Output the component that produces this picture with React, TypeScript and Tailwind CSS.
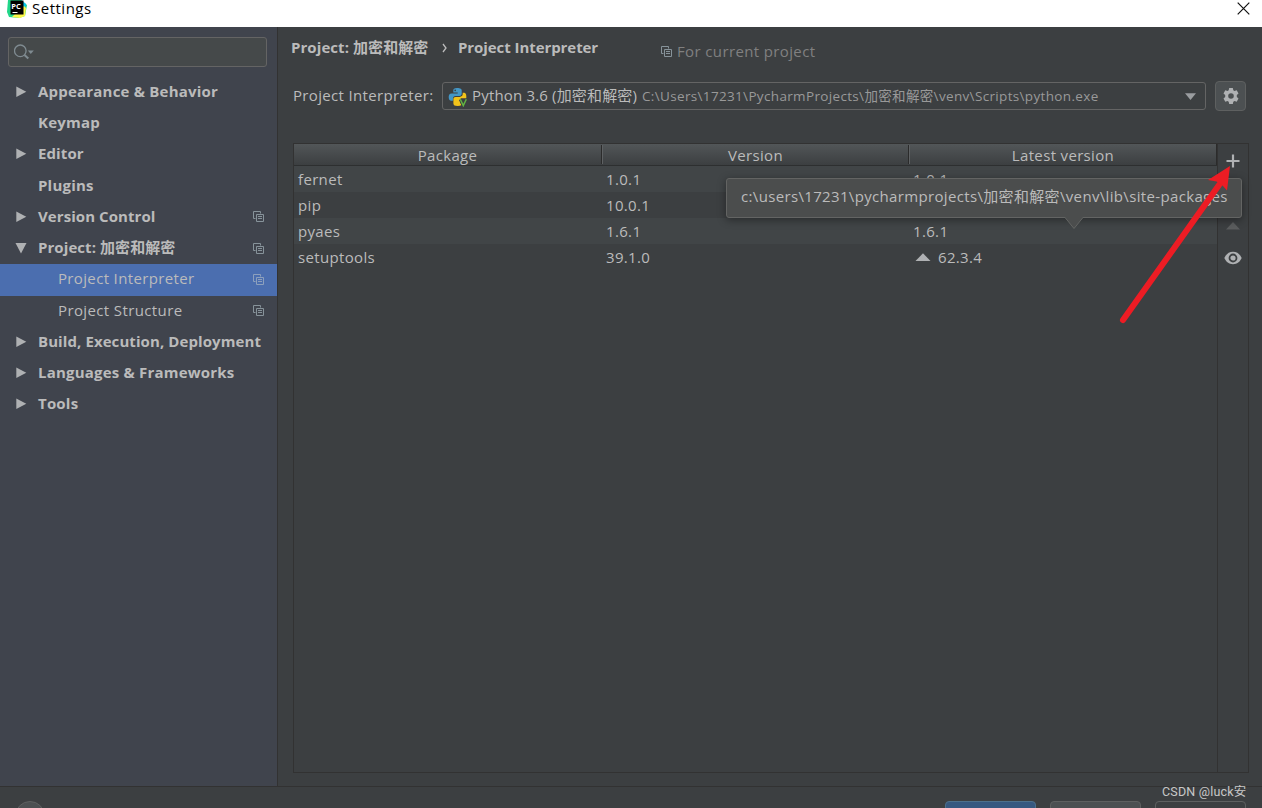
import React from "react";

const Copy = ({ className = "" }: { className?: string }) => (
  <svg width="11" height="11" viewBox="0 0 11 11" fill="none" stroke="currentColor" className={"shrink-0 " + className}>
    <path d="M2.500 7.500h-2v-7h7v2" />
    <path d="M3.500 3.500h7v7h-7z" />
    <path d="M5 5.500h4M5 7.500h4" />
  </svg>
);

const Arrow = ({ open }: { open?: boolean }) => (
  <svg width="12" height="12" viewBox="0 0 12 12" fill="#afb1b3" className="shrink-0">
    {open ? <path d="M.5 1h11L6 11.500z" /> : <path d="M1.300.5v10.500l10-5.250z" />}
  </svg>
);

const tree = [
  { label: "Appearance & Behavior", kind: "closed", sp: "tracking-[0.21px]" },
  { label: "Keymap", kind: "leaf", sp: "tracking-[0.2px]" },
  { label: "Editor", kind: "closed", sp: "tracking-[0.1px]" },
  { label: "Plugins", kind: "leaf", sp: "tracking-[0.2px]" },
  { label: "Version Control", kind: "closed", copy: true, sp: "tracking-[0.07px]" },
  { label: "Project: 加密和解密", kind: "open", copy: true, sp: "tracking-[0.07px]" },
  { label: "Project Interpreter", kind: "child", copy: true, selected: true, sp: "tracking-[0.35px]" },
  { label: "Project Structure", kind: "child", copy: true, sp: "tracking-[0.38px]" },
  { label: "Build, Execution, Deployment", kind: "closed", sp: "tracking-[0.09px]" },
  { label: "Languages & Frameworks", kind: "closed", sp: "tracking-[0.2px]" },
  { label: "Tools", kind: "closed", sp: "tracking-[0.2px]" },
];

const packages = [
  { name: "fernet", version: "1.0.1", latest: "1.0.1" },
  { name: "pip", version: "10.0.1", latest: "" },
  { name: "pyaes", version: "1.6.1", latest: "1.6.1" },
  { name: "setuptools", version: "39.1.0", latest: "62.3.4", upgrade: true },
];

function Sidebar() {
  return (
    <aside className="flex w-[278px] shrink-0 flex-col border-r border-[#323232] bg-[#40444d]">
      <div className="mx-2 mt-[10px] flex h-[30px] w-[259px] items-center rounded-[3px] border border-[#646464] bg-[#45494a] pl-[5px]">
        <svg width="22" height="18" viewBox="0 0 22 18" fill="none" stroke="#7f8b91" strokeWidth="1.300">
          <circle cx="6.300" cy="7.800" r="5.800" />
          <path d="M10.500 12l3.800 3.500" strokeWidth="2" />
          <path d="M13.800 7.500h6l-3 3.500z" fill="#7f8b91" stroke="none" />
        </svg>
      </div>
      <nav className="mt-[9.75px] flex flex-col">
        {tree.map((n) => (
          <div key={n.label} className={"flex h-[31.25px] items-center pr-[13px] pl-[15px] " + (n.selected ? "bg-[#4b6eaf]" : "")}>
            <span className={"-mt-px flex shrink-0 " + (n.kind === "child" ? "w-[43px]" : "w-[23px]")}>
              {(n.kind === "closed" || n.kind === "open") && <Arrow open={n.kind === "open"} />}
            </span>
            <span className={"-mt-[3px] flex-1 whitespace-nowrap " + n.sp + (n.kind === "child" ? "" : " font-bold")}>{n.label}</span>
            {n.copy && <Copy className={"-mt-px " + (n.selected ? "text-[#8da0bd]" : "text-[#87939a]")} />}
          </div>
        ))}
      </nav>
    </aside>
  );
}

function Python() {
  return (
    <svg width="20" height="20" viewBox="0 0 20 20" className="mt-px shrink-0">
      <path d="M9 1C6 1 5.300 2 5.300 3.600v2h4.400v.8H3.500C1.500 6.400.7 8 .7 10s.8 3.800 2.600 3.800h1.600v-2.300c0-1.500 1.100-2.600 2.600-2.600h4c1.300 0 2.200-1 2.200-2.200V3.600C13.700 2 12.600 1 9 1z" fill="#4497c7" />
      <circle cx="7.200" cy="3.400" r="0.800" fill="#3c3f41" />
      <path d="M14.700 5.700h1.400c1.400 0 2.200 1.500 2.200 3.500v2h-5.500l-1 2 1.500 5c-.8.500-2 .7-3.600.7-3 0-4.300-.8-4.300-2.500V12c0-1.300.8-2.100 2.200-2.100h4.100c1.700 0 3-1.100 3-2.800z" fill="#f2c31b" />
      <path d="M12.300 12.300l3 6.500 3-6.500" fill="none" stroke="#3c3f41" strokeWidth="3" />
      <path d="M12.300 12.300l3 6.300 3-6.300" fill="none" stroke="#62b543" strokeWidth="1.500" />
    </svg>
  );
}

const headCell = "flex items-center justify-center";

function PackageTable() {
  return (
    <div className="mt-[31px] ml-[15px] flex h-[630px] w-[956px] border border-[#323232]">
      <div className="w-[923px] shrink-0">
        <div className="flex h-[22px] border-b border-[#2d2f30] bg-linear-to-b from-[#525658] to-[#3c3f41]">
          <div className={headCell + " w-[307px]"}>Package</div>
          <div className="my-px w-px bg-[#2b2b2b]" />
          <div className="my-px w-px bg-[#5e6163]" />
          <div className={headCell + " w-[305px]"}>Version</div>
          <div className="my-px w-px bg-[#2b2b2b]" />
          <div className="my-px w-px bg-[#5e6163]" />
          <div className={headCell + " w-[306px]"}>Latest version</div>
          <div className="w-px bg-[#2b2b2b]" />
        </div>
        {packages.map((p, i) => (
          <div key={p.name} className={"flex h-[26px] items-center " + (i % 2 ? "" : "bg-[#414547]")}>
            <div className="w-[308px] pl-1">{p.name}</div>
            <div className="w-[307px] pl-1">{p.version}</div>
            <div className="flex items-center pl-1">
              {p.upgrade && (
                <svg width="25" height="8" viewBox="0 0 25 8" fill="#afb1b3"><path d="M2.500 8h15L10 .3z" /></svg>
              )}
              {p.latest}
            </div>
          </div>
        ))}
      </div>
      <div className="flex flex-1 flex-col items-center border-l border-[#323232] pt-[10px]">
        <svg width="14" height="14" viewBox="0 0 14 14" stroke="#afb1b3" strokeWidth="2.200"><path d="M7 .5v13M.5 7h13" /></svg>
        <svg width="14" height="8" viewBox="0 0 14 8" fill="#5b5d5e" className="mt-[54px]"><path d="M0 7.500h14L7 0z" /></svg>
        <svg width="18" height="14" viewBox="0 0 18 14" className="mt-[21px]">
          <path d="M.3 7C2 3.200 5 .8 9 .8S16 3.200 17.700 7C16 10.800 13 13.200 9 13.200S2 10.800.3 7z" fill="#afb1b3" />
          <circle cx="9" cy="7" r="3.500" fill="none" stroke="#3c3f41" strokeWidth="1.800" />
        </svg>
      </div>
    </div>
  );
}

export default function App() {
  return (
    <div className="relative flex h-[808px] w-[1262px] flex-col overflow-hidden bg-[#3c3f41] font-['Open_Sans','Noto_Sans_CJK_SC',sans-serif] text-[15px] leading-5 tracking-[0.34px] text-[#bbbbbb]">
      <header className="flex h-[27px] shrink-0 items-start bg-white pl-[7px] text-black">
        <svg width="20" height="18" viewBox="0 0 20 18">
          <path d="M1 0h13l6 5-2 11-6 2-10-1L0 12z" fill="#21d789" />
          <path d="M14 0l5 4-1 5-4-5z" fill="#07c3f2" />
          <path d="M17 6l2 2-1 8-5 2-8-1 3-3z" fill="#fcf84a" />
          <path d="M3.500 0.500h13v14h-13z" fill="#000" />
          <path d="M5.500 12.500h5" stroke="#fff" />
          <text x="4.300" y="8.500" fontSize="7.500" letterSpacing="0" fontWeight="700" fill="#fff">PC</text>
        </svg>
        <span className="-mt-[2px] ml-[5px] tracking-[0.5px]">Settings</span>
        <svg width="13" height="13" viewBox="0 0 13 13" stroke="#111" strokeWidth="1.200" className="mt-[2px] mr-[12px] ml-auto"><path d="M.7.7l11.600 11.600M12.300.7L.7 12.300" /></svg>
      </header>
      <div className="flex h-[759px] shrink-0">
        <Sidebar />
        <main className="flex-1">
          <div className="flex pt-[10px] pl-[13px]">
            <b className="w-[137px] whitespace-nowrap tracking-[0.07px]">Project: 加密和解密</b>
            <svg width="6" height="10" viewBox="0 0 6 10" fill="none" stroke="#bbb" strokeWidth="1.300" className="mt-[6px] mr-[10px] ml-[14px]"><path d="M1 1l3 4-3 4" /></svg>
            <b className="w-[140px] whitespace-nowrap tracking-[-0.07px]">Project Interpreter</b>
            <span className="mt-1 ml-[63px] flex items-center gap-[5px] tracking-[0.37px] text-[#808080]">
              <Copy className="text-[#87939a]" />For current project
            </span>
          </div>
          <div className="mt-[20px] flex h-[31px] items-start pl-[15px]">
            <span className="mt-[4px] w-[149px] whitespace-nowrap">Project Interpreter:</span>
            <div className="mt-px flex h-[28px] w-[764px] items-center rounded-[3px] border border-[#646464] pr-[9px] pl-[5px]">
              <Python />
              <span className="-mt-[2px] ml-[4px] w-[170px] whitespace-nowrap tracking-[0.17px]">Python 3.6 (加密和解密)</span>
              <span className="-mt-px text-[13.500px] whitespace-nowrap text-[#999]">C:\Users\17231\PycharmProjects\加密和解密\venv\Scripts\python.exe</span>
              <svg width="11" height="7" viewBox="0 0 11 7" fill="#9a9da0" className="ml-auto"><path d="M0 .3h11L5.500 7z" /></svg>
            </div>
            <div className="ml-[9px] flex h-[30px] w-[31px] items-center justify-center rounded-[4px] border border-[#5e6060] bg-[#4c5052]">
              <svg width="18" height="18" viewBox="0 0 18 18" fill="#afb1b3" fillRule="evenodd">
                <path d="M7.200 1h3.600l.5 2.300 1.200.7 2.200-.7 1.800 3.100L14.800 8v2l1.700 1.600-1.800 3.100-2.200-.7-1.200.7-.5 2.300H7.200l-.5-2.300-1.200-.7-2.200.7-1.800-3.100L3.200 10V8L1.500 6.400l1.800-3.100 2.200.7 1.200-.7zM9 6.200a2.800 2.800 0 100 5.600 2.800 2.800 0 000-5.600z" />
              </svg>
            </div>
          </div>
          <PackageTable />
        </main>
      </div>
      <footer className="relative flex h-[22px] shrink-0 items-start border-t border-[#323232] pt-[14px]">
        <div className="ml-[15px] h-[30px] w-[30px] shrink-0 rounded-full border border-[#5e6060] bg-[#4c5052]" />
        <div className="ml-[900px] h-[30px] w-[91px] shrink-0 rounded-[4px] border border-[#4c708c] bg-[#365880]" />
        <div className="ml-[14px] h-[30px] w-[91px] shrink-0 rounded-[4px] border border-[#5e6060] bg-[#4c5052]" />
        <div className="ml-[14px] h-[30px] w-[91px] shrink-0 rounded-[4px] border border-[#5e6060]" />
      </footer>
      <div className="absolute top-[178px] left-[726px] flex h-[40px] w-[516px] items-center rounded-[3px] border border-[#636463] bg-[#4b4d4d] pl-[14px] shadow-[0_2px_8px_rgba(0,0,0,0.4)]">
        <span className="-mt-[4px] whitespace-nowrap">c:\users\17231\pycharmprojects\加密和解密\venv\lib\site-packages</span>
        <svg width="20" height="12" viewBox="0 0 20 12" className="absolute top-[38px] left-[337px]">
          <path d="M1 0v.5L10 11.500 19 .5V0" fill="#4b4d4d" stroke="#636463" />
        </svg>
      </div>
      <svg width="130" height="170" viewBox="0 0 130 170" className="absolute top-[160px] left-[1110px]">
        <path d="M13 160L109 25" stroke="#ed1c24" strokeWidth="6" strokeLinecap="round" />
        <path d="M120 6L98 20l8.500 1.500 6.500 4.500 4 4.500z" fill="#ed1c24" />
      </svg>
      <span className="absolute top-[782px] left-[1162px] font-['Roboto','Noto_Sans_CJK_SC',sans-serif] text-[12.500px] tracking-[0.2px] whitespace-nowrap text-[#c8c8c8]">CSDN @luck安</span>
    </div>
  );
}
